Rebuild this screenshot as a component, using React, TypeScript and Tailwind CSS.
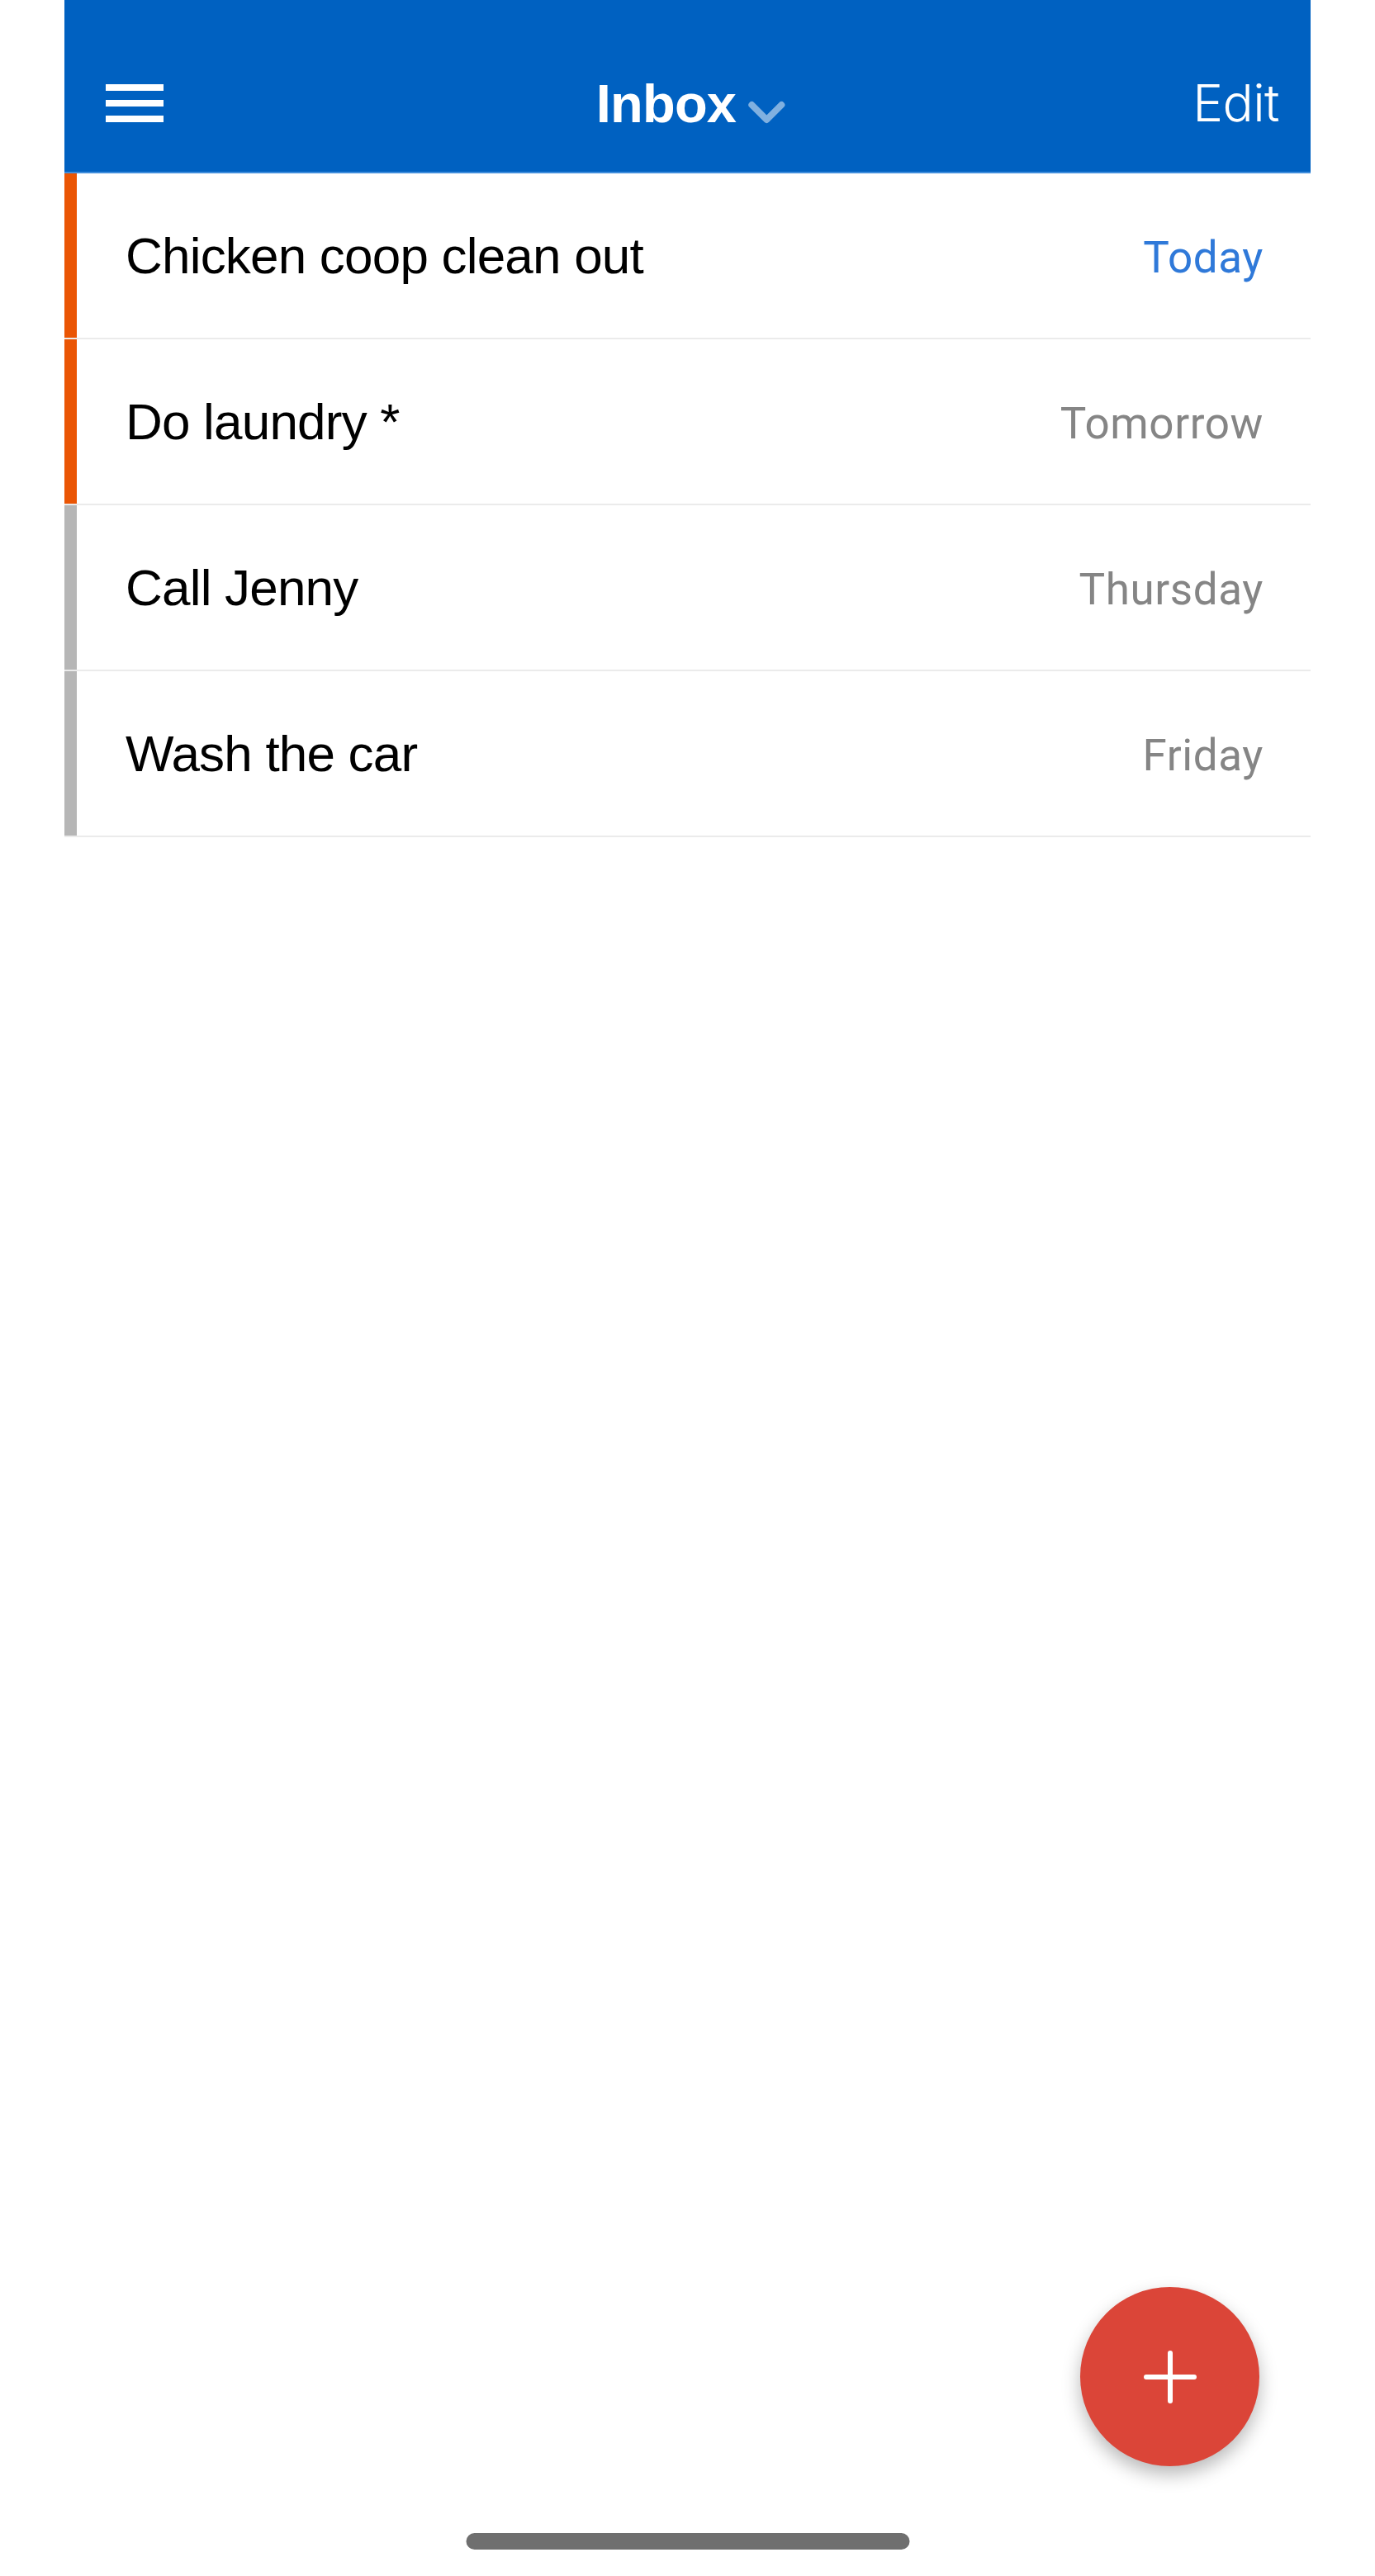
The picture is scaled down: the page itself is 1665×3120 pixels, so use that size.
import React from "react";

const tasks = [
  { title: "Chicken coop clean out", date: "Today", bar: "bg-[#ea5504]", dateColor: "text-[#2f79d9]" },
  { title: "Do laundry *", date: "Tomorrow", bar: "bg-[#ea5504]", dateColor: "text-[#858585]" },
  { title: "Call Jenny", date: "Thursday", bar: "bg-[#b6b6b6]", dateColor: "text-[#858585]" },
  { title: "Wash the car", date: "Friday", bar: "bg-[#b6b6b6]", dateColor: "text-[#858585]" },
];

export default function App() {
  return (
    <div className="relative h-[3120px] w-full overflow-hidden bg-white">
      <div className="ml-[78px] w-[1509px]">
        {/* Header */}
        <header className="h-[210px] border-b-2 border-[#3f8ddc] bg-[#0061c1] pt-[42px]">
          <div className="relative flex h-[166px] items-center justify-between pl-[50px] pr-[38px]">
            <div className="flex w-[70px] flex-col gap-[11px]">
              <span className="block h-[8px] w-[70px] bg-white" />
              <span className="block h-[8px] w-[70px] bg-white" />
              <span className="block h-[8px] w-[70px] bg-white" />
            </div>
            <div className="absolute left-1/2 top-0 flex h-full -translate-x-1/2 items-center pl-[8px]">
              <span
                className="text-[65px] font-bold leading-none tracking-[-0.8px] text-white"
                style={{ fontFamily: '"Liberation Sans", Arial, sans-serif' }}
              >
                Inbox
              </span>
              <svg
                width="46"
                height="30"
                viewBox="0 0 46 30"
                className="ml-[14px] mt-[22px]"
                fill="none"
              >
                <polyline
                  points="5,6 23,24 41,6"
                  stroke="rgba(255,255,255,0.5)"
                  strokeWidth="8"
                  strokeLinecap="round"
                  strokeLinejoin="round"
                />
              </svg>
            </div>
            <span
              className="text-[62px] font-light leading-none tracking-[-0.6px] text-white"
              style={{ fontFamily: 'Inter, "Liberation Sans", sans-serif' }}
            >
              Edit
            </span>
          </div>
        </header>

        {/* Task list */}
        <div>
          {tasks.map((t) => (
            <div key={t.title} className="flex h-[201px] flex-col">
              <div className="flex flex-1">
                <div className={`w-[15px] ${t.bar}`} />
                <div className="flex flex-1 items-center justify-between pl-[59px] pr-[57px]">
                  <span
                    className="text-[62px] leading-none tracking-[-0.8px] text-black"
                    style={{ fontFamily: '"Liberation Sans", Arial, sans-serif' }}
                  >
                    {t.title}
                  </span>
                  <span
                    className={`pt-[5px] text-[53px] leading-none tracking-[0.6px] ${t.dateColor}`}
                    style={{ fontFamily: 'Roboto, "Liberation Sans", sans-serif' }}
                  >
                    {t.date}
                  </span>
                </div>
              </div>
              <div className="h-[2px] bg-[#ebebeb]" />
            </div>
          ))}
        </div>
      </div>

      {/* Floating action button */}
      <button className="absolute bottom-[133px] right-[140px] flex h-[217px] w-[217px] items-center justify-center rounded-full bg-[#db4538] shadow-[0_10px_22px_rgba(0,0,0,0.28)]">
        <svg width="64" height="64" viewBox="0 0 64 64" fill="none">
          <path d="M32 3 V61 M3 32 H61" stroke="white" strokeWidth="6" strokeLinecap="round" />
        </svg>
      </button>

      {/* Home indicator */}
      <div className="absolute bottom-[32px] left-1/2 h-[20px] w-[537px] -translate-x-1/2 rounded-full bg-[#6f6f6f]" />
    </div>
  );
}
